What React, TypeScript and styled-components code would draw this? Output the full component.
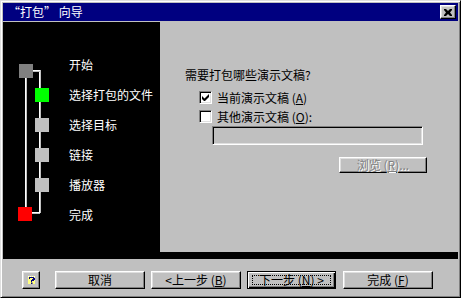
import React from "react";
import styled, { createGlobalStyle, css } from "styled-components";

const GlobalStyle = createGlobalStyle`
  html, body { margin: 0; padding: 0; background: #c0c0c0; }
  * { box-sizing: border-box; }
  body { font-family: "Noto Sans CJK SC", "Noto Sans", sans-serif; font-size: 12px; }
`;

const raised = css`
  background: #c0c0c0;
  border: 1px solid;
  border-color: #ffffff #000000 #000000 #ffffff;
  box-shadow: inset -1px -1px #808080, inset 1px 1px #dfdfdf;
`;

const sunken = css`
  border: 1px solid;
  border-color: #808080 #ffffff #ffffff #808080;
  box-shadow: inset 1px 1px #000000, inset -1px -1px #dfdfdf;
`;

const Window = styled.div`
  width: 461px;
  height: 298px;
  background: #c0c0c0;
  border: 1px solid;
  border-color: #dfdfdf #000000 #000000 #dfdfdf;
  box-shadow: inset 1px 1px #ffffff, inset -1px -1px #808080;
  padding: 2px;
  display: flex;
  flex-direction: column;
`;

const TitleBar = styled.div`
  height: 18px;
  margin-bottom: 1px;
  background: #000080;
  color: #ffffff;
  display: flex;
  align-items: center;
  justify-content: space-between;
  padding: 0 2px 0 5px;
  font-size: 12px;
  line-height: 18px;
`;

const TitleText = styled.span`
  white-space: nowrap;
`;

const CloseButton = styled.div`
  ${raised};
  width: 16px;
  height: 14px;
  display: flex;
  align-items: center;
  justify-content: center;
`;

const Main = styled.div`
  display: flex;
  height: 230px;
`;

const StepPanel = styled.div`
  width: 157px;
  background: #000000;
  display: flex;
  align-items: flex-start;
  padding-left: 15px;
`;

const Diagram = styled.svg`
  margin-top: 42px;
  flex: none;
`;

const StepList = styled.div`
  margin-top: 28px;
  margin-left: 15px;
  display: flex;
  flex-direction: column;
`;

const StepLabel = styled.div`
  height: 30px;
  line-height: 30px;
  color: #ffffff;
  white-space: nowrap;
`;

const ContentPanel = styled.div`
  flex: 1;
  background: #c0c0c0;
  padding: 45px 0 0 25px;
  display: flex;
  flex-direction: column;
  color: #000000;
`;

const Question = styled.div`
  height: 15px;
  line-height: 15px;
  margin-bottom: 6px;
`;

const OptionRow = styled.div`
  display: flex;
  align-items: center;
  height: 19px;
  padding-left: 14px;
  gap: 5px;
`;

const CheckBox = styled.div`
  ${sunken};
  width: 13px;
  height: 13px;
  background: #ffffff;
  display: flex;
  align-items: center;
  justify-content: center;
`;

const TextField = styled.div`
  ${sunken};
  width: 211px;
  height: 19px;
  margin: 0 0 0 27px;
  background: #c0c0c0;
`;

const BrowseButton = styled.div`
  ${raised};
  width: 88px;
  height: 16px;
  margin: 12px 0 0 154px;
  color: #808080;
  text-shadow: 1px 1px #ffffff;
  display: flex;
  align-items: center;
  justify-content: center;
  line-height: 14px;
`;

const Separator = styled.div`
  height: 7px;
  background: #000000;
`;

const Footer = styled.div`
  flex: 1;
  display: flex;
  align-items: flex-start;
  padding: 12px 0 0 19px;
`;

const Button = styled.div<{ $w: number; $gap: number; $default?: boolean }>`
  ${raised};
  width: ${(p) => p.$w}px;
  height: 18px;
  margin-right: ${(p) => p.$gap}px;
  display: flex;
  align-items: center;
  justify-content: center;
  line-height: 14px;
  white-space: nowrap;
  ${(p) =>
    p.$default &&
    css`
      border: 1px solid #000000;
      box-shadow: inset 1px 1px #ffffff, inset -1px -1px #000000,
        inset -2px -2px #808080;
    `}
`;

const FocusRing = styled.span`
  border: 1px dotted #000000;
  width: calc(100% - 8px);
  height: calc(100% - 6px);
  display: flex;
  align-items: center;
  justify-content: center;
`;

const U = styled.span`
  text-decoration: underline;
`;

const sq = 14;

function StepDiagram() {
  const silverYs = [54, 84, 114];
  return (
    <Diagram width={36} height={160} viewBox="0 0 36 160">
      <rect x={7} y={10} width={1} height={136} fill="#ffffff" />
      <rect x={8} y={10} width={1} height={136} fill="#c0c0c0" />
      <rect x={21} y={6} width={1} height={143} fill="#ffffff" />
      <rect x={22} y={6} width={1} height={143} fill="#c0c0c0" />
      <rect x={14} y={6} width={8} height={1} fill="#ffffff" />
      <rect x={14} y={7} width={8} height={1} fill="#c0c0c0" />
      <rect x={13} y={148} width={9} height={1} fill="#ffffff" />
      <rect x={13} y={149} width={9} height={1} fill="#c0c0c0" />
      <rect x={1} y={0} width={sq} height={sq} fill="#808080" />
      <rect x={17} y={24} width={sq} height={sq} fill="#00ff00" />
      {silverYs.map((y) => (
        <rect key={y} x={17} y={y} width={sq} height={sq} fill="#c0c0c0" />
      ))}
      <rect x={0} y={143} width={sq} height={sq} fill="#ff0000" />
    </Diagram>
  );
}

function CloseIcon() {
  return (
    <svg width={8} height={7} viewBox="0 0 8 7">
      <path
        d="M0 0h2l2 2 2-2h2v1L6 3.5 8 6v1H6L4 5 2 7H0V6l2-2.5L0 1z"
        fill="#000000"
      />
    </svg>
  );
}

function CheckMark() {
  return (
    <svg width={7} height={7} viewBox="0 0 7 7">
      <path d="M0 2v3l2 2h1l4-4V0L2.5 4.5z" fill="#000000" />
    </svg>
  );
}

function HelpIcon() {
  return (
    <svg width={7} height={8} viewBox="0 0 7 8">
      <rect x={0} y={0} width={7} height={8} fill="#ffff80" />
      <rect x={0} y={0} width={1} height={1} fill="#ffffff" />
      <rect x={2} y={0} width={1} height={1} fill="#ffffff" />
      <rect x={4} y={0} width={1} height={1} fill="#ffffff" />
      <rect x={6} y={0} width={1} height={1} fill="#ffffff" />
      <path
        d="M1 1h5v1h1v2H6v1H4v1H3V4h1V3h1V2H2v1H1z M3 6.5h1.5V8H3z"
        fill="#000080"
      />
    </svg>
  );
}

const steps = ["开始", "选择打包的文件", "选择目标", "链接", "播放器", "完成"];

export default function App() {
  return (
    <>
      <GlobalStyle />
      <Window lang="zh-CN">
        <TitleBar>
          <TitleText>“打包” 向导</TitleText>
          <CloseButton>
            <CloseIcon />
          </CloseButton>
        </TitleBar>
        <Main>
          <StepPanel>
            <StepDiagram />
            <StepList>
              {steps.map((s) => (
                <StepLabel key={s}>{s}</StepLabel>
              ))}
            </StepList>
          </StepPanel>
          <ContentPanel>
            <Question>需要打包哪些演示文稿?</Question>
            <OptionRow>
              <CheckBox>
                <CheckMark />
              </CheckBox>
              <span>
                当前演示文稿 (<U>A</U>)
              </span>
            </OptionRow>
            <OptionRow>
              <CheckBox />
              <span>
                其他演示文稿 (<U>O</U>):
              </span>
            </OptionRow>
            <TextField />
            <BrowseButton>
              <span>
                浏览 (<U>R</U>)...
              </span>
            </BrowseButton>
          </ContentPanel>
        </Main>
        <Separator />
        <Footer>
          <Button $w={18} $gap={15}>
            <HelpIcon />
          </Button>
          <Button $w={90} $gap={6}>
            取消
          </Button>
          <Button $w={90} $gap={6}>
            &lt;上一步 (<U>B</U>)
          </Button>
          <Button $w={89} $gap={7} $default>
            <FocusRing>
              下一步 (<U>N</U>) &gt;
            </FocusRing>
          </Button>
          <Button $w={90} $gap={0}>
            完成 (<U>F</U>)
          </Button>
        </Footer>
      </Window>
    </>
  );
}
